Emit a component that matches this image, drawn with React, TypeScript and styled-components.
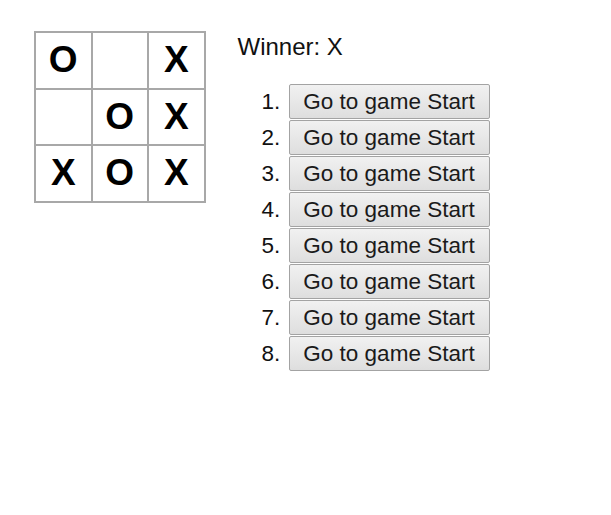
import React from "react";
import styled, { createGlobalStyle } from "styled-components";

const GlobalStyle = createGlobalStyle`
  html, body { margin: 0; padding: 0; background: #fff; }
  body { font-family: "Liberation Sans", Arial, sans-serif; color: #000; }
`;

const Game = styled.div`
  display: flex;
  flex-direction: row;
  align-items: flex-start;
  padding: 31px 0 0 34px;
`;

const Board = styled.div`
  display: grid;
  grid-template-columns: repeat(3, 54.5px);
  grid-auto-rows: 54.5px;
  gap: 2px;
  padding: 2px;
  background: #a8a8a8;
`;

const Square = styled.div`
  background: #fff;
  font-family: "Liberation Sans", Arial, sans-serif;
  font-weight: bold;
  font-size: 37px;
  line-height: 54.5px;
  text-align: center;
  color: #000;
`;

const Info = styled.div`
  margin-left: 32px;
  display: flex;
  flex-direction: column;
`;

const Status = styled.div`
  font-size: 24px;
  line-height: 28px;
  margin-top: 2px;
  margin-bottom: 23px;
  color: #111;
`;

const Moves = styled.ol`
  margin: 0;
  padding-left: 49px;
  font-size: 22.5px;
  color: #111;
`;

const Move = styled.li`
  height: 36px;
  line-height: 35px;
`;

const MoveButton = styled.button`
  height: 35px;
  width: 201px;
  margin-left: 2px;
  padding: 0;
  border: 1px solid #a3a3a3;
  border-radius: 2px;
  background: linear-gradient(#f1f1f1, #dedede);
  font-family: "Liberation Sans", Arial, sans-serif;
  font-size: 22.5px;
  color: #1a1a1a;
  vertical-align: baseline;
  line-height: 33px;
`;

const squares = ["O", "", "X", "", "O", "X", "X", "O", "X"];

export default function App() {
  return (
    <>
      <GlobalStyle />
      <Game>
        <Board>
          {squares.map((s, i) => (
            <Square key={i}>{s}</Square>
          ))}
        </Board>
        <Info>
          <Status>Winner: X</Status>
          <Moves>
            {Array.from({ length: 8 }, (_, i) => (
              <Move key={i}>
                <MoveButton>Go to game Start</MoveButton>
              </Move>
            ))}
          </Moves>
        </Info>
      </Game>
    </>
  );
}
